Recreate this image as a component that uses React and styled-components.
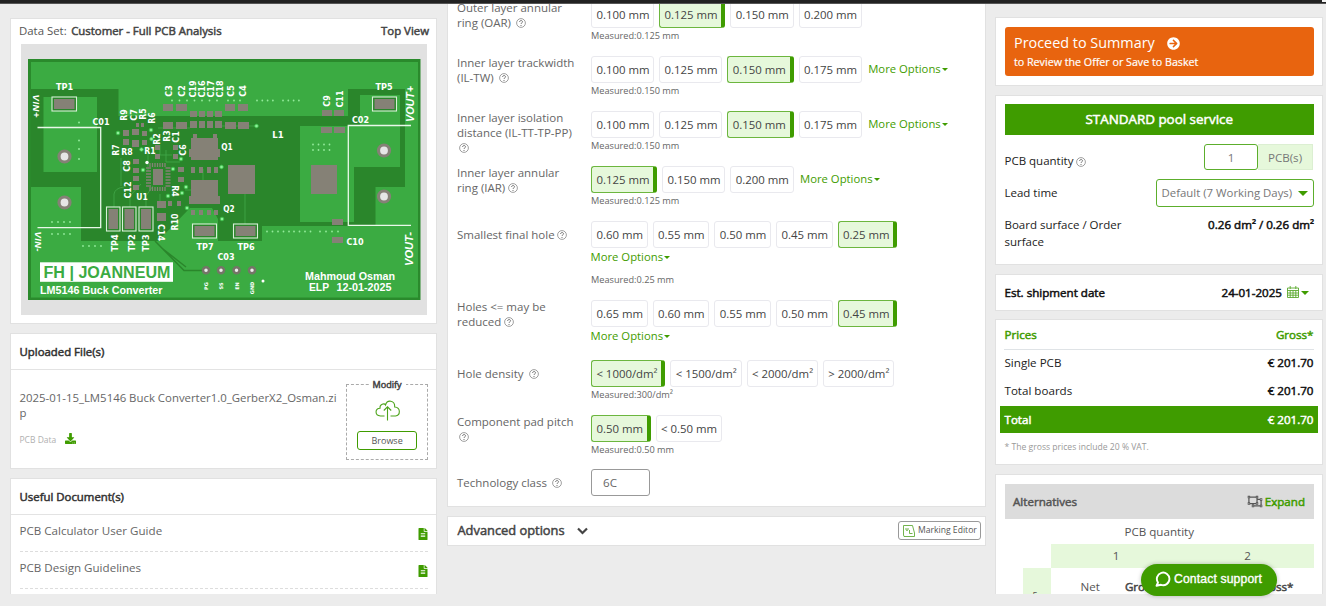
import React from "react";
import styled, { createGlobalStyle, css } from "styled-components";
import { FaArrowCircleRight, FaDownload, FaFileAlt, FaRegObjectUngroup } from "react-icons/fa";

const green = "#3f9c00";
const paleGreen = "#e6f8db";

const GlobalStyle = createGlobalStyle`
  *, *::before, *::after { box-sizing: border-box; }
  html, body { margin: 0; padding: 0; height: 606px; overflow: hidden; }
  body {
    background: #ececec;
    color: #555;
    font-family: "Open Sans", "Liberation Sans", sans-serif;
    font-size: 11.6px;
    line-height: 15px;
  }
`;

const strong = css`
  -webkit-text-stroke: 0.5px currentColor;
`;

const TopBar = styled.header`
  height: 4px;
  background: #222;
  border-bottom: 1px solid #555;
  display: flex;
  justify-content: flex-end;
`;
const TopBarEnd = styled.div`
  width: 4px;
  height: 2px;
  background: #f4f4f4;
`;

const Main = styled.main`
  display: grid;
  grid-template-columns: 427px 539px 328px;
  column-gap: 10px;
  padding-left: 10px;
  height: 590px;
  overflow: hidden;
  align-items: start;
`;

const Column = styled.div`
  display: flex;
  flex-direction: column;
  padding-top: ${(p) => p.$top || 0}px;
  margin-left: ${(p) => p.$ml || 0}px;
  width: ${(p) => (p.$w ? p.$w + "px" : "auto")};
`;

const Card = styled.section`
  background: #fff;
  border: 1px solid #e1e1e1;
  height: ${(p) => p.$h}px;
  flex: none;
  margin-top: ${(p) => p.$mt || 0}px;
  margin-bottom: ${(p) => p.$gap || 0}px;
  padding: ${(p) => p.$pad || "0"};
`;

/* ---------- left column ---------- */

const PreviewHead = styled.div`
  display: flex;
  height: 25px;
  padding-top: 4px;
  margin-left: -2px;
  font-size: 11.4px;
`;
const PreviewName = styled.span`
  ${strong}
  margin-left: 4.5px;
  color: #444;
`;
const PreviewSide = styled(PreviewName)`
  margin-left: auto;
  margin-right: -2px;
`;
const Canvas = styled.div`
  background: #e1e1e1;
  height: 271px;
  width: 406px;
  svg { display: block; }
`;

const CardHead = styled.h3`
  ${strong}
  margin: 0;
  height: 36px;
  padding: 10px 8.5px 0;
  border-bottom: 1px solid #e3e3e3;
  font-size: 11.4px;
  font-weight: 400;
  color: #333;
`;
const UploadBody = styled.div`
  display: flex;
  padding: 9px 8px 0 8.5px;
`;
const FileInfo = styled.div`
  width: 327.5px;
  padding-top: 11px;
  font-size: 11.4px;
  color: #666;
`;
const FileName = styled.div`
  width: 320px;
  word-break: break-all;
`;
const FileKind = styled.div`
  display: flex;
  align-items: center;
  gap: 9px;
  margin-top: 12px;
  font-size: 8.5px;
  color: #b0b0b0;
  svg { color: ${green}; width: 11px; height: 11px; margin-top: -3px; }
`;
const DropZone = styled.fieldset`
  margin: 0;
  padding: 10px 0 0;
  width: 82px;
  height: 81px;
  min-width: 0;
  border: 1px dashed #aaa;
  display: flex;
  flex-direction: column;
  align-items: center;
`;
const DropLegend = styled.legend`
  ${strong}
  padding: 0 4px;
  margin: 0 auto;
  font-size: 9.1px;
  line-height: 11px;
  color: #444;
`;
const Browse = styled.button`
  margin: 10px 0 0;
  padding: 0;
  width: 60px;
  height: 19px;
  border: 1px solid ${green};
  border-radius: 3px;
  background: #fff;
  color: #555;
  font: 9px/15px "Open Sans", sans-serif;
`;
const DocRow = styled.div`
  display: flex;
  justify-content: space-between;
  margin: 0 8px 0 8.5px;
  height: 37px;
  padding-top: 8px;
  border-bottom: 1px dashed #ddd;
  font-size: 11.6px;
  color: #666;
  svg { color: ${green}; width: 10px; height: 12px; margin-top: 5px; }
`;

/* ---------- options form ---------- */

const Row = styled.div`
  display: grid;
  grid-template-columns: 134px 1fr;
  height: ${(p) => p.$h}px;
`;
const Label = styled.div`
  padding-top: ${(p) => (p.$single ? 6.5 : -0.5)}px;
  font-size: 11.5px;
  line-height: 14.8px;
  color: #666;
  white-space: pre-line;
`;
const HelpSvg = styled.svg`
  width: 10px;
  height: 10px;
  margin-left: ${(p) => p.$ml}px;
  vertical-align: -1.5px;
`;
const Chips = styled.div`
  display: flex;
  gap: 5px;
  height: 27.4px;
`;
const Chip = styled.span`
  flex: none;
  padding: 4.6px 3.7px 0 4.4px;
  border: 1px solid #e9e9ee;
  border-radius: 3px;
  font-size: 11.4px;
  color: #444;
  white-space: nowrap;
  ${(p) =>
    p.$on &&
    css`
      background: ${paleGreen};
      border-color: #6cb63e;
      border-right: 4.6px solid ${green};
    `}
`;
const More = styled.span`
  display: flex;
  align-items: center;
  gap: 1px;
  height: ${(p) => (p.$below ? 17 : 25)}px;
  margin-left: ${(p) => (p.$below ? -0.5 : 1.5)}px;
  color: ${green};
  font-size: 11.3px;
`;
const Caret = styled.span`
  border: solid transparent;
  border-width: ${(p) => p.$s || 3}px ${(p) => p.$s || 3}px 0;
  border-top-color: ${green};
  height: 0;
  width: 0;
  margin: 1px 0 0 ${(p) => p.$ml || 0}px;
`;
const Measured = styled.div`
  margin-top: ${(p) => p.$mt || 1}px;
  font-size: 9.2px;
  line-height: 13px;
  color: #666;
`;
const ClassInput = styled.div`
  width: 59px;
  height: 27px;
  padding: 5px 11px;
  border: 1px solid #999;
  border-radius: 3px;
  color: #666;
`;
const Advanced = styled.div`
  display: flex;
  align-items: center;
  height: 27px;
  color: #444;
`;
const AdvancedTitle = styled.span`
  ${strong}
  font-size: 12.85px;
  margin-right: 12.5px;
`;
const Marking = styled.span`
  display: flex;
  align-items: center;
  gap: 3px;
  margin-left: auto;
  width: 83px;
  height: 19px;
  padding-left: 4px;
  border: 1px solid #999;
  border-radius: 3px;
  font-size: 8.6px;
  color: #555;
  white-space: nowrap;
`;

/* ---------- right column ---------- */

const Proceed = styled.div`
  height: 49px;
  border-radius: 3px;
  background: #e8640f;
  color: #fff;
  padding: 6px 9.5px;
`;
const ProceedTitle = styled.div`
  display: flex;
  align-items: center;
  gap: 12px;
  font-size: 14.4px;
  line-height: 20px;
  svg { width: 13px; height: 13px; }
`;
const ProceedSub = styled.div`
  -webkit-text-stroke: 0.2px #fff;
  font-size: 10.7px;
  line-height: 19px;
`;
const Service = styled.h2`
  ${strong}
  margin: 0;
  height: 31px;
  background: ${green};
  color: #fff;
  text-align: center;
  font-size: 13.4px;
  font-weight: 400;
  line-height: 31px;
`;
const Field = styled.div`
  display: flex;
  justify-content: space-between;
  align-items: ${(p) => (p.$top ? "flex-start" : "center")};
  margin-top: ${(p) => p.$mt}px;
  height: ${(p) => p.$h}px;
  color: #222;
  line-height: ${(p) => (p.$top ? 17 : 15)}px;
`;
const FieldName = styled.span`
  width: ${(p) => (p.$w ? p.$w + "px" : "auto")};
  padding-top: ${(p) => p.$pt || 0}px;
  padding-bottom: ${(p) => p.$pb || 0}px;
  font-size: 11.5px;
`;
const Bold = styled.span`
  ${strong}
  color: ${(p) => p.$c || "#111"};
`;
const Quantity = styled.div`
  display: flex;
  margin-right: 1px;
  height: 26px;
  line-height: 25px;
  text-align: center;
  color: #777;
`;
const QtyInput = styled.div`
  width: 54px;
  border: 1px solid #5cae2c;
  border-radius: 3px;
`;
const QtyUnit = styled.div`
  width: 55px;
  background: ${paleGreen};
  border: 1px solid #dcefd2;
  border-left: 0;
`;
const Select = styled.div`
  display: flex;
  align-items: center;
  justify-content: space-between;
  width: 158.5px;
  height: 28px;
  padding: 0 5px 1px;
  border: 1px solid #5cae2c;
  border-radius: 3px;
  font-size: 11.4px;
  color: #777;
  white-space: nowrap;
`;
const ShipDate = styled.span`
  display: flex;
  align-items: center;
  gap: 5px;
  padding-right: 5px;
`;
const PriceRow = styled.div`
  display: flex;
  justify-content: space-between;
  align-items: center;
  height: ${(p) => p.$h}px;
  padding: 0 4.5px ${(p) => p.$lift || 0}px;
  margin: 0 4px;
  color: ${(p) => (p.$total ? "#fff" : "#222")};
  background: ${(p) => (p.$total ? green : "none")};
`;
const Rule = styled.div`
  height: 1px;
  margin: 0 8px;
  background: #dfe3e6;
`;
const VatNote = styled.div`
  margin: 7px 8.5px 0;
  font-size: 8.6px;
  line-height: 14px;
  color: #999;
`;
const AltHead = styled.div`
  display: flex;
  align-items: center;
  justify-content: space-between;
  height: 35px;
  padding: 0 9px 1px 8.5px;
  background: #dcdcdc;
`;
const Expand = styled.span`
  display: flex;
  align-items: center;
  gap: 2px;
  svg { width: 16px; height: 13px; color: #555; }
`;
const AltCaption = styled.div`
  height: 25px;
  line-height: 25px;
  text-align: center;
`;
const AltTable = styled.div`
  display: grid;
  grid-template-columns: 28px 131px 132px;
  grid-template-rows: 24px 40px;
  margin-left: 18px;
`;
const QtyCell = styled.div`
  background: ${paleGreen};
  line-height: 23px;
  text-align: center;
`;
const DayCell = styled.div`
  background: ${paleGreen};
  padding: 23px 0 0 10px;
  font-size: 9px;
  line-height: 9px;
`;
const PriceCell = styled.div`
  display: flex;
  gap: 25px;
  padding: 11px 0 0 30px;
`;
const Support = styled.button`
  position: absolute;
  left: 1141px;
  top: 564px;
  width: 136px;
  height: 32px;
  border: 0;
  border-radius: 16px;
  padding: 0 0 2px 14px;
  display: flex;
  align-items: center;
  gap: 3px;
  background: ${green};
  color: #fff;
  font: 12.2px "Liberation Sans", Arial, sans-serif;
  letter-spacing: 0.13px;
  -webkit-text-stroke: 0.35px #fff;
  white-space: nowrap;
  box-shadow: 0 0 4px rgba(0, 0, 0, 0.25);
`;

const Help = ({ ml = 5 }) => (
  <HelpSvg $ml={ml} viewBox="0 0 10 10">
    <circle cx="5" cy="5" r="4.4" fill="none" stroke="#777" strokeWidth=".7" />
    <path d="M3.6 4c0-2 2.9-1.9 2.9-.2C6.500 4.900 5 4.900 5 6" fill="none" stroke="#666" strokeWidth=".9" />
    <circle cx="5" cy="7.500" r=".6" fill="#666" />
  </HelpSvg>
);

const boardText = [
  ["TP1", 64.5, 90], ["C01", 101, 125], ["TP5", 384, 90], ["C02", 360.5, 123],
  ["L1", 278, 138], ["Q1", 227, 150], ["Q2", 229, 212], ["R8", 127, 155], ["R1", 150, 154],
  ["U1", 142, 200], ["TP7", 205, 250], ["TP6", 246, 250], ["C03", 226, 259.5], ["C10", 355, 244.5],
];
const boardUpright = [
  ["C3", 169, 91], ["C2", 181.5, 91], ["C19", 192.5, 89], ["C16", 201.5, 89], ["C17", 210.5, 89],
  ["C18", 219.5, 89], ["C5", 230.5, 91], ["C4", 243, 91], ["C9", 327, 101], ["C11", 340, 99],
  ["R9", 124, 115], ["C7", 133.5, 115], ["R5", 143, 114], ["R6", 152, 118], ["R2", 157, 139],
  ["R3", 166.5, 136], ["C1", 175.5, 137], ["C6", 183, 150], ["R7", 116, 150], ["C8", 127, 166],
  ["C12", 128, 190], ["TP4", 115, 243], ["TP2", 131.5, 243], ["TP3", 146, 243], ["R10", 175, 222],
];
const parts = [
  [163, 104, 10, 7], [176, 104, 11, 7], [190, 111, 7, 6], [199, 111, 6, 6], [207, 111, 6, 6], [215, 111, 7, 6],
  [163, 122, 10, 7], [176, 122, 11, 7], [190, 121, 7, 7], [199, 121, 6, 7], [207, 121, 6, 7], [215, 121, 7, 7],
  [225, 104, 10, 7], [238, 104, 10, 7], [225, 122, 11, 7], [238, 122, 11, 7],
  [322, 110, 10, 6], [334, 110, 10, 6], [321, 127, 11, 6], [334, 127, 11, 6],
  [123, 130, 6, 6], [132, 129, 7, 6], [123, 139, 6, 6], [132, 140, 7, 7], [142, 131, 5, 5], [142, 140, 5, 5],
  [136, 123, 3, 4], [141, 123, 3, 4], [155, 145, 5, 5], [155, 154, 5, 5], [173, 145, 5, 5], [173, 154, 5, 5],
  [191, 138, 27, 22], [189, 149, 31, 8], [193, 134, 4, 5], [213, 134, 4, 5],
  [191, 180, 27, 23], [189, 196, 31, 8], [191, 167, 4, 6], [199, 167, 4, 6], [207, 167, 4, 6], [214, 167, 4, 6],
  [191, 210, 4, 5], [199, 210, 4, 5], [207, 210, 4, 5], [214, 210, 4, 5],
  [228, 165, 27, 29], [311, 165, 26, 29], [332, 219, 11, 6], [332, 237, 11, 6],
  [153, 169, 10, 16], [178, 167, 6, 5], [178, 177, 6, 5], [157, 201, 9, 7], [157, 213, 9, 8],
  [168, 201, 4, 5], [177, 201, 4, 5], [133, 159, 6, 5], [133, 168, 6, 5], [133, 176, 6, 5], [133, 185, 6, 5],
];
const boxed = [
  [52, 97, 24.5, 14], [372.5, 97, 24, 14], [192.5, 224, 24, 14], [233.5, 224, 24, 14],
  [106.5, 207, 13.5, 24], [122.5, 207, 13.5, 24], [139, 207, 14, 24],
];
const vias = [
  [118, 133], [151, 130], [141.5, 149.5], [151.5, 139], [256.5, 126], [173, 169], [181, 159], [143, 170],
  [168, 196], [186, 187], [182, 193], [187, 208], [221.5, 167], [222, 219],
];
const dotRows = [
  [172, 100.5, 7, 7.5], [228, 100.5, 3, 6], [257, 100.5, 4, 5.3], [283, 100.5, 4, 5.3],
  [313, 144.5, 4, 5.5], [313, 150, 4, 5.5], [52, 222, 4, 6], [52, 234, 4, 6], [83, 246, 4, 6],
  [267, 231.5, 5, 5.5], [294, 231.5, 4, 5.5], [320, 231.5, 4, 6],
];

const Board = () => (
  <svg width="406" height="271" viewBox="21 44 406 271" fontFamily="'DejaVu Sans','Liberation Sans',sans-serif">
    <rect x="28" y="59" width="392.500" height="241" fill="#2a8a2c" />
    <rect x="31" y="62" width="387" height="235.500" fill="#3bab42" />
    <path d="M31 89H118.500V116H348V89H405V187H375.500V226H262V241H218V219L212 208H190L158 241H81V187H31Z" fill="#2a862b" />
    <path d="M43.500 97H97V172H43.500ZM31 187H81V241H31ZM360 95H400V167H354V126H360ZM300 126H354V222H300Z" fill="#3bab42" />
    <path d="M155 241L184 270.500H202M163 249L186 267" fill="none" stroke="#2a862b" strokeWidth="1.500" />
    <path d="M114 207V194Q115 188 124 187M130 207V196L141 184M146 207V196L153 186M158 128H190M222 126H256M245 194V224M203 169V180M160 145V155H172M166 150V162H180M148 153V171M185 190H191M160 194V201M121 186V158" fill="none" stroke="#43a84a" strokeWidth=".8" />
    {parts.map(([x, y, w, h], i) => <rect key={i} x={x} y={y} width={w} height={h} fill="#858176" />)}
    {[0, 1, 2, 3, 4, 5, 6].map((i) => (
      <path key={i} d={`M146 ${168 + i * 3}h5M165.500 ${168 + i * 3}h5M${150 + i * 2.5} 163v4M${150 + i * 2.5} 187v4`} stroke="#858176" strokeWidth="1.300" />
    ))}
    {boxed.map(([x, y, w, h], i) => (
      <g key={i}>
        <rect x={x} y={y} width={w} height={h} fill="#2a862b" stroke="#d8f0d8" strokeWidth="1.100" />
        <rect x={x + 2} y={y + 2} width={w - 4} height={h - 4} fill="#858176" />
      </g>
    ))}
    {vias.map(([x, y], i) => <circle key={i} cx={x} cy={y} r="1.800" fill="#8ff09a" stroke="#3bc24a" strokeWidth=".8" />)}
    {dotRows.map(([x, y, n, s], i) => (
      <g key={i} fill="#93eb9b">{Array.from({ length: n }, (_, k) => <circle key={k} cx={x + k * s} cy={y} r=".9" />)}</g>
    ))}
    {[122.5, 140.5, 149, 159].map((y) => <circle key={y} cx="79" cy={y} r="1" fill="#8fe997" />)}
    <path d="M37.500 127.500H100.700V227.600H37.500M411 125.500H348.300V225.300H411" fill="none" stroke="#e9f8e9" strokeWidth="1.300" />
    {[[64.5, 156.5], [64.5, 202.5], [384, 150.5], [384, 196.5]].map(([x, y]) => (
      <circle key={x + "-" + y} cx={x} cy={y} r="5.500" fill="#e6e6e6" stroke="#858176" strokeWidth="3.200" />
    ))}
    {[206, 221, 236.5, 252].map((x) => (
      <circle key={x} cx={x} cy="270.300" r="3" fill="#eee" stroke="#757568" strokeWidth="2.500" />
    ))}
    <circle cx="263" cy="281" r="1.500" fill="#fff" />
    <circle cx="147" cy="162.500" r="1.700" fill="#fff" />
    <g fill="#fff" fontSize="9.500" fontWeight="700" textAnchor="middle">
      {boardText.map(([t, x, y]) => <text key={t} x={x} y={y} textLength={t.length * 5.7} lengthAdjust="spacingAndGlyphs">{t}</text>)}
      {boardUpright.map(([t, x, y]) => (
        <text key={t} transform={`translate(${x + 3.4} ${y}) rotate(-90)`} textLength={t.length * 5.7} lengthAdjust="spacingAndGlyphs">{t}</text>
      ))}
      <text transform="translate(172 191) rotate(90)" textLength="11.500" lengthAdjust="spacingAndGlyphs">R4</text>
      <text transform="translate(158 232.500) rotate(90)" textLength="17" lengthAdjust="spacingAndGlyphs">C14</text>
    </g>
    <g fill="#fff" fontSize="5" fontWeight="700" textAnchor="middle">
      <text transform="translate(207.500 286) rotate(-90)">PG</text>
      <text transform="translate(223 286) rotate(-90)">SS</text>
      <text transform="translate(238.500 286) rotate(-90)">EN</text>
      <text transform="translate(253.500 288) rotate(-90)">GND</text>
    </g>
    <g fill="#fff" fontFamily="'Liberation Sans',Arial,sans-serif" fontWeight="700">
      <g fontSize="9.500" fontStyle="italic" textAnchor="middle">
        <text transform="translate(33 106) rotate(90)" textLength="23">VIN+</text>
        <text transform="translate(35 241.500) rotate(90)" textLength="20">VIN-</text>
        <text transform="translate(413.500 104) rotate(-90)" fontSize="10" textLength="36" lengthAdjust="spacingAndGlyphs">VOUT+</text>
        <text transform="translate(412.500 249) rotate(-90)" fontSize="10" textLength="34" lengthAdjust="spacingAndGlyphs">VOUT-</text>
      </g>
      <rect x="40" y="262.300" width="133" height="19.500" />
      <text x="43.500" y="277.800" fontSize="16" fill="#3bab42" textLength="127" lengthAdjust="spacingAndGlyphs">FH | JOANNEUM</text>
      <text x="40" y="294.300" fontSize="10.500" textLength="122.500" lengthAdjust="spacingAndGlyphs">LM5146 Buck Converter</text>
      <text x="305" y="279.500" fontSize="10.500" textLength="90" lengthAdjust="spacingAndGlyphs">Mahmoud Osman</text>
      <text x="309" y="291.300" fontSize="10" textLength="20" lengthAdjust="spacingAndGlyphs">ELP</text>
      <text x="336.500" y="291.300" fontSize="10" textLength="55" lengthAdjust="spacingAndGlyphs">12-01-2025</text>
    </g>
  </svg>
);

const options = [
  { label: "Outer layer annular\nring (OAR)", h: 55, v: ["0.100 mm", "0.125 mm", "0.150 mm", "0.200 mm"], on: 1, m: "0.125 mm" },
  { label: "Inner layer trackwidth\n(IL-TW)", h: 55, v: ["0.100 mm", "0.125 mm", "0.150 mm", "0.175 mm"], on: 2, more: "side", m: "0.150 mm" },
  { label: "Inner layer isolation\ndistance (IL-TT-TP-PP)\n", ml: 2, h: 55, v: ["0.100 mm", "0.125 mm", "0.150 mm", "0.175 mm"], on: 2, more: "side", m: "0.150 mm" },
  { label: "Inner layer annular\nring (IAR)", ml: 3, h: 55, v: ["0.125 mm", "0.150 mm", "0.200 mm"], on: 0, more: "side", m: "0.125 mm" },
  { label: "Smallest final hole", single: true, ml: 2, h: 79, v: ["0.60 mm", "0.55 mm", "0.50 mm", "0.45 mm", "0.25 mm"], on: 4, more: "below", m: "0.25 mm" },
  { label: "Holes <= may be\nreduced", ml: 2.5, h: 60, v: ["0.65 mm", "0.60 mm", "0.55 mm", "0.50 mm", "0.45 mm"], on: 4, more: "below" },
  { label: "Hole density", single: true, ml: 5.5, h: 55, v: ["< 1000/dm²", "< 1500/dm²", "< 2000/dm²", "> 2000/dm²"], on: 0, m: "300/dm²" },
  { label: "Component pad pitch\n", ml: 2, h: 54, v: ["0.50 mm", "< 0.50 mm"], on: 0, m: "0.50 mm" },
];

const MoreOptions = ({ below }) => <More $below={below}>More Options<Caret /></More>;

const OptionRow = ({ o }) => (
  <Row $h={o.h}>
    <Label $single={o.single}>{o.label}<Help ml={o.ml} /></Label>
    <div>
      <Chips>
        {o.v.map((v, i) => <Chip key={v} $on={i === o.on}>{v}</Chip>)}
        {o.more === "side" && <MoreOptions />}
      </Chips>
      {o.more === "below" && <MoreOptions below />}
      {o.m && <Measured $mt={o.more === "below" ? 8 : 1}>Measured:{o.m}</Measured>}
    </div>
  </Row>
);

export default function App() {
  return (
    <>
      <GlobalStyle />
      <TopBar><TopBarEnd /></TopBar>
      <Main>
        <Column $top={14}>
          <Card $h={306} $gap={9} $pad="0 9px 0 10px">
            <PreviewHead>
              <span>Data Set:</span>
              <PreviewName>Customer - Full PCB Analysis</PreviewName>
              <PreviewSide>Top View</PreviewSide>
            </PreviewHead>
            <Canvas><Board /></Canvas>
          </Card>
          <Card $h={136} $gap={9}>
            <CardHead>Uploaded File(s)</CardHead>
            <UploadBody>
              <FileInfo>
                <FileName>2025-01-15_LM5146 Buck Converter1.0_GerberX2_Osman.zip</FileName>
                <FileKind>PCB Data <FaDownload /></FileKind>
              </FileInfo>
              <DropZone>
                <DropLegend>Modify</DropLegend>
                <svg width="25" height="21" viewBox="0 0 25 21" fill="none" stroke="#4da41b" strokeWidth="1.100">
                  <path d="M9.500 16H5.500C-.5 15.500-.2 8.500 5 8.200 4.500 4 9.500 3 10.500 5 12-.5 20-.2 19.700 7 26 7.500 25.500 15.500 20.500 16H15.500M12.500 20.500V7M8.800 10.500 12.500 6.800l3.700 3.700" />
                </svg>
                <Browse>Browse</Browse>
              </DropZone>
            </UploadBody>
          </Card>
          <Card $h={130}>
            <CardHead>Useful Document(s)</CardHead>
            <DocRow>PCB Calculator User Guide<FaFileAlt /></DocRow>
            <DocRow>PCB Design Guidelines<FaFileAlt /></DocRow>
          </Card>
        </Column>

        <Column>
          <Card $h={507} $gap={9} $mt={-4} $pad="0 9px">
            {options.map((o) => <OptionRow key={o.label} o={o} />)}
            <Row $h={27}>
              <Label $single>Technology class<Help ml={5} /></Label>
              <ClassInput>6C</ClassInput>
            </Row>
          </Card>
          <Card $h={30} $pad="0 4px 0 9.500px">
            <Advanced>
              <AdvancedTitle>Advanced options</AdvancedTitle>
              <svg width="11" height="8" viewBox="0 0 11 8"><path d="M1 1.500 5.500 6 10 1.500" fill="none" stroke="#444" strokeWidth="2.200" /></svg>
              <Marking>
                <svg width="12" height="12" viewBox="0 0 12 12" fill="none" stroke="#63ac3a" strokeWidth=".9">
                  <path d="M.5.500H9.500L11.500 8V11.500H1L.5 10ZM3 3v2q1 1 2 0V3M6.500 5v3.500h3" />
                </svg>
                Marking Editor
              </Marking>
            </Advanced>
          </Card>
        </Column>

        <Column $top={13} $ml={-1} $w={328}>
          <Card $h={69} $gap={9} $pad="9px 8px 0 8.500px">
            <Proceed>
              <ProceedTitle>Proceed to Summary <FaArrowCircleRight /></ProceedTitle>
              <ProceedSub>to Review the Offer or Save to Basket</ProceedSub>
            </Proceed>
          </Card>
          <Card $h={170} $gap={9} $pad="8px 8px 0 8.500px">
            <Service>STANDARD pool service</Service>
            <Field $mt={9} $h={26}>
              <FieldName $pt={7}>PCB quantity<Help ml={2.5} /></FieldName>
              <Quantity><QtyInput>1</QtyInput><QtyUnit>PCB(s)</QtyUnit></Quantity>
            </Field>
            <Field $mt={9} $h={28}>
              <FieldName $pb={1.5}>Lead time</FieldName>
              <Select>Default (7 Working Days)<Caret $s={5} /></Select>
            </Field>
            <Field $mt={8.5} $h={34} $top>
              <FieldName $w={130}>Board surface / Order surface</FieldName>
              <Bold>0.26 dm² / 0.26 dm²</Bold>
            </Field>
          </Card>
          <Card $h={37} $gap={8} $pad="0 8px 0 8.500px">
            <Field $mt={0} $h={34}>
              <Bold>Est. shipment date</Bold>
              <ShipDate>
                <Bold>24-01-2025</Bold>
                <svg width="12" height="12" viewBox="0 0 12 12" fill="none" stroke="#5aa82e" strokeWidth=".9">
                  <path d="M.5 2H11.500V11.500H.5ZM.5 4.500H11.500M.5 7H11.500M.5 9.200H11.500M3.200 4.500V11.500M6 4.500V11.500M8.800 4.500V11.500M3.200 0V3M8.800 0V3" />
                </svg>
                <Caret $s={4.5} $ml={-3} />
              </ShipDate>
            </Field>
          </Card>
          <Card $h={146} $gap={9}>
            <PriceRow $h={29}><Bold $c={green}>Prices</Bold><Bold $c={green}>Gross*</Bold></PriceRow>
            <Rule />
            <PriceRow $h={28} $lift={3}><span>Single PCB</span><Bold>€ 201.70</Bold></PriceRow>
            <PriceRow $h={28} $lift={3}><span>Total boards</span><Bold>€ 201.70</Bold></PriceRow>
            <PriceRow $h={27} $total><Bold $c="#fff">Total</Bold><Bold $c="#fff">€ 201.70</Bold></PriceRow>
            <VatNote>* The gross prices include 20 % VAT.</VatNote>
          </Card>
          <Card $h={140} $pad="9px 8px 0 8.500px">
            <AltHead>
              <Bold $c="#555">Alternatives</Bold>
              <Expand><FaRegObjectUngroup /><Bold $c={green}>Expand</Bold></Expand>
            </AltHead>
            <AltCaption>PCB quantity</AltCaption>
            <AltTable>
              <span />
              <QtyCell>1</QtyCell>
              <QtyCell>2</QtyCell>
              <DayCell>5</DayCell>
              <PriceCell><span>Net</span><Bold $c="#444">Gross*</Bold></PriceCell>
              <PriceCell><span>Net</span><Bold $c="#444">Gross*</Bold></PriceCell>
            </AltTable>
          </Card>
        </Column>
      </Main>
      <Support>
        <svg width="16" height="16" viewBox="0 0 16 16" fill="none" stroke="#fff" strokeWidth="1.900">
          <path d="M1.500 14.800 3 11.500A6.300 6.300 0 1 1 6 13.800Z" strokeLinejoin="round" />
        </svg>
        Contact support
      </Support>
    </>
  );
}
